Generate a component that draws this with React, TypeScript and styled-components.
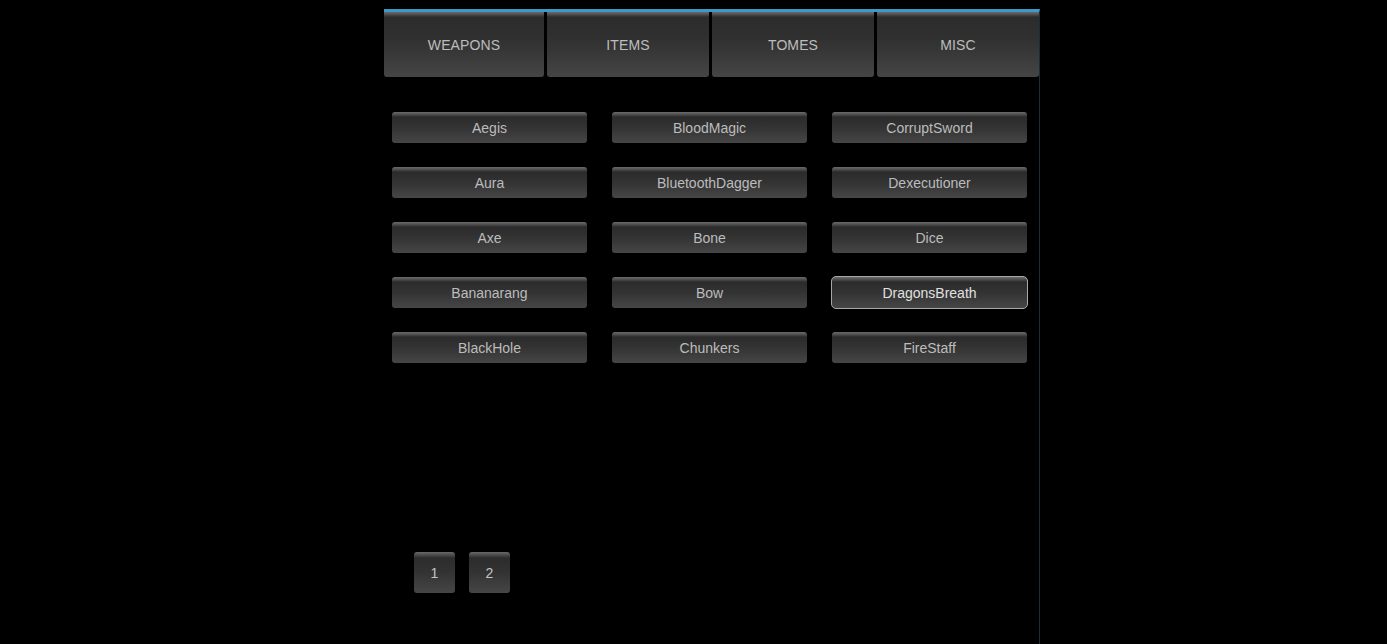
import React from 'react';
import styled, { createGlobalStyle } from 'styled-components';

const GlobalStyle = createGlobalStyle`
  html, body {
    margin: 0;
    padding: 0;
    background: #000;
    font-family: "Liberation Sans", Arial, sans-serif;
  }
`;

const Page = styled.div`
  min-height: 644px;
  background: #000;
  padding-top: 9px;
  box-sizing: border-box;
`;

const Panel = styled.div`
  margin-left: 384px;
  width: 655px;
  min-height: 635px;
  border-top: 3px solid #3a9cc6;
  border-right: 1px solid #15303d;
  display: flex;
  flex-direction: column;
`;

const TabBar = styled.div`
  display: flex;
  gap: 3px;
  height: 65px;
`;

const Tab = styled.button<{ $first?: boolean }>`
  flex: ${(p) => (p.$first ? '0 0 160px' : '1 1 0')};
  border: none;
  border-radius: 0 0 3px 3px;
  background: linear-gradient(
    #6a6a6a 0,
    #555 2px,
    #2c2c2c 5px,
    #303030 40%,
    #454545 100%
  );
  color: #bdbdbd;
  font-family: inherit;
  font-size: 14px;
  letter-spacing: 0.1px;
  text-transform: uppercase;
  padding: 0;
  cursor: pointer;
`;

const Grid = styled.div`
  display: grid;
  grid-template-columns: repeat(3, 195px);
  grid-auto-rows: 31px;
  column-gap: 25px;
  row-gap: 24px;
  padding: 35px 0 0 8px;
`;

const ItemButton = styled.button<{ $selected?: boolean }>`
  margin: ${(p) => (p.$selected ? '-1px' : '0')};
  border: ${(p) => (p.$selected ? '1px solid #a8a8a8' : 'none')};
  border-radius: ${(p) => (p.$selected ? '5px' : '3px')};
  background: linear-gradient(
    #6a6a6a 0,
    #555 2px,
    #2b2b2b 5px,
    #333 50%,
    #464646 100%
  );
  color: ${(p) => (p.$selected ? '#e0e0e0' : '#bcbcbc')};
  font-family: inherit;
  font-size: 14px;
  padding: 0;
  cursor: pointer;
`;

const Pager = styled.div`
  display: flex;
  gap: 14px;
  margin-top: 189px;
  padding-left: 30px;
`;

const PageButton = styled.button`
  width: 41px;
  height: 41px;
  border: none;
  border-radius: 3px;
  background: linear-gradient(
    #6a6a6a 0,
    #555 2px,
    #2c2c2c 6px,
    #333 50%,
    #464646 100%
  );
  color: #c4c4c4;
  font-family: inherit;
  font-size: 14px;
  padding: 0;
  cursor: pointer;
`;

const tabs = ['Weapons', 'Items', 'Tomes', 'Misc'];

const items = [
  'Aegis', 'BloodMagic', 'CorruptSword',
  'Aura', 'BluetoothDagger', 'Dexecutioner',
  'Axe', 'Bone', 'Dice',
  'Bananarang', 'Bow', 'DragonsBreath',
  'BlackHole', 'Chunkers', 'FireStaff',
];

export default function App() {
  const selected = 'DragonsBreath';
  return (
    <>
      <GlobalStyle />
      <Page>
        <Panel>
          <TabBar>
            {tabs.map((t, i) => (
              <Tab key={t} $first={i === 0}>
                {t}
              </Tab>
            ))}
          </TabBar>
          <Grid>
            {items.map((name) => (
              <ItemButton key={name} $selected={name === selected}>
                {name}
              </ItemButton>
            ))}
          </Grid>
          <Pager>
            <PageButton>1</PageButton>
            <PageButton>2</PageButton>
          </Pager>
        </Panel>
      </Page>
    </>
  );
}
